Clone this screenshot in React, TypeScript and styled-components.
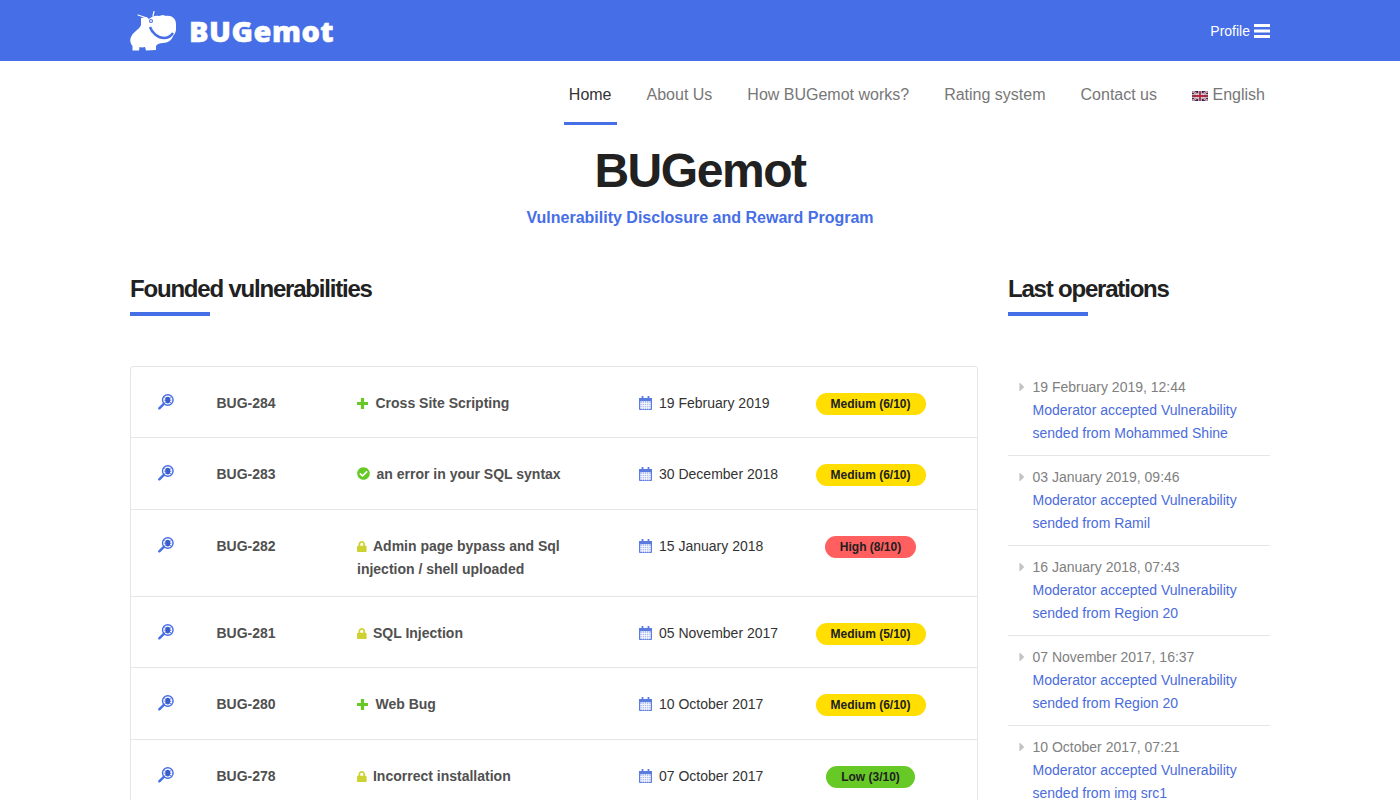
import React from 'react';
import styled, { createGlobalStyle } from 'styled-components';
import { FaCheckCircle, FaLock, FaCaretRight } from 'react-icons/fa';

const BLUE = '#466ee6';

const Global = createGlobalStyle`
  html, body { margin: 0; padding: 0; background: #fff; overflow: hidden; height: 800px; }
  body { font-family: "Liberation Sans", Arial, sans-serif; color: #212121; font-size: 14px; }
`;
const TopBar = styled.header`
  background: ${BLUE};
  height: 61px;
`;
const Container = styled.div`
  width: 1140px;
  margin: 0 auto;
`;
const TopInner = styled(Container)`
  display: flex;
  align-items: center;
  justify-content: space-between;
  height: 61px;
`;
const Logo = styled.div`
  display: flex;
  align-items: center;
  gap: 13px;
  color: #fff;
  height: 61px;
`;
const LogoText = styled.span`
  font-family: "Open Sans", sans-serif;
  font-weight: 800;
  font-size: 29px;
  letter-spacing: 0.5px;
  line-height: 1;
  -webkit-text-stroke: 0.5px #fff;
`;
const ProfileLink = styled.div`
  display: flex;
  align-items: center;
  gap: 4px;
  color: #fff;
  font-size: 14px;
`;
const Nav = styled.nav`
  display: flex;
  justify-content: flex-end;
  gap: 25px;
  height: 64px;
`;
const NavItem = styled.a<{ $active?: boolean }>`
  display: flex;
  align-items: center;
  gap: 4.5px;
  height: 64px;
  box-sizing: border-box;
  padding: 7px 5px 0;
  font-size: 16px;
  color: ${p => (p.$active ? '#333' : '#777')};
  border-bottom: 3px solid ${p => (p.$active ? BLUE : 'transparent')};
`;
const Hero = styled.div`
  text-align: center;
`;
const Title = styled.h1`
  margin: 17px 0 0;
  font-size: 48px;
  line-height: 58px;
  font-weight: 700;
  letter-spacing: -1.45px;
  color: #212121;
`;
const Subtitle = styled.p`
  margin: 6px 0 0;
  font-size: 16px;
  line-height: 24px;
  font-weight: 700;
  color: ${BLUE};
`;
const Columns = styled(Container)`
  display: grid;
  grid-template-columns: 848px 262px;
  column-gap: 30px;
  margin-top: 41px;
`;
const SectionTitle = styled.h2`
  margin: 0;
  height: 50px;
  font-size: 24px;
  line-height: 36px;
  font-weight: 700;
  letter-spacing: -1.2px;
  color: #212121;
  display: flex;
  flex-direction: column;
  &::after {
    content: '';
    width: 80px;
    height: 4px;
    margin-top: 5px;
    background: ${BLUE};
  }
`;
const Table = styled.div`
  margin-top: 45px;
  border: 1px solid #e6e6e6;
  border-radius: 3px;
`;
const Row = styled.div`
  display: grid;
  grid-template-columns: 85.5px 140.5px 282px 176.5px 1fr;
  min-height: 71.4px;
  box-sizing: border-box;
  padding: 25px 0 15px;
  border-bottom: 1px solid #e6e6e6;
  line-height: 23px;
  &:last-child { border-bottom: 0; }
`;
const SearchCell = styled.div`
  padding-left: 27px;
`;
const SearchSvg = styled.svg`
  display: block;
  margin-top: 2px;
`;
const BugId = styled.div`
  font-weight: 700;
  color: #505050;
`;
const Vuln = styled.div`
  font-weight: 700;
  color: #505050;
  padding-right: 58px;
`;
const StatusIcon = styled.span<{ $color: string; $gap: number }>`
  display: inline-block;
  height: 0;
  line-height: 0;
  color: ${p => p.$color};
  margin-right: ${p => p.$gap}px;
  svg { vertical-align: -1px; }
`;
const LockGlyph = styled(FaLock)`
  width: 9.6px;
  height: 11px;
`;
const CheckGlyph = styled(FaCheckCircle)`
  width: 13px;
  height: 13px;
`;
const DateCell = styled.div`
  color: #333;
  display: flex;
  align-items: flex-start;
  gap: 7px;
`;
const CalendarSvg = styled.svg`
  margin-top: 4px;
  flex: none;
`;
const BadgeCell = styled.div`
  width: 110px;
  display: flex;
  justify-content: center;
  margin-top: 1px;
`;
const Badge = styled.span<{ $bg: string }>`
  background: ${p => p.$bg};
  color: #212121;
  font-size: 12px;
  font-weight: 700;
  line-height: 22px;
  height: 22px;
  padding: 0 15px;
  border-radius: 11px;
`;
const Ops = styled.ul`
  list-style: none;
  margin: 45px 0 0;
  padding: 0;
`;
const Op = styled.li`
  display: grid;
  grid-template-columns: 24.5px 1fr;
  padding: 10px 0;
  border-bottom: 1px solid #e6e6e6;
  line-height: 23px;
  &:last-child { border-bottom: 0; }
`;
const OpArrow = styled.span`
  color: #c4c4c4;
  font-size: 14px;
  padding-left: 7px;
  svg { vertical-align: -2px; }
`;
const OpDate = styled.div`
  color: #808080;
`;
const OpLink = styled.a`
  display: block;
  color: #4a6cdc;
`;
const BarsSvg = styled.svg`
  display: block;
  margin-top: 1px;
`;
const FlagSvg = styled.svg`
  flex: none;
  margin-top: 2px;
`;
const HippoSvg = styled.svg`
  flex: none;
  margin-top: 1px;
`;

const BugSearch = () => (
  <SearchSvg width="16" height="16" viewBox="0 0 17 17" fill="none">
    <circle cx="10.4" cy="6.4" r="5.6" stroke={BLUE} strokeWidth="1.5" />
    <path d="M6.2 10.6 1.4 15.2" stroke={BLUE} strokeWidth="2.6" strokeLinecap="round" />
    <ellipse cx="10.4" cy="6.4" rx="2.6" ry="3.6" fill="#3a5ccc" />
    <path d="M6.8 3.8 9 5M14 3.8 11.8 5M6.6 6.6h2.4M14.2 6.6h-2.4M6.8 9.4 9 8M14 9.4 11.8 8" stroke="#3a5ccc" strokeWidth=".9" />
  </SearchSvg>
);
const Calendar = () => (
  <CalendarSvg width="13" height="14" viewBox="0 0 13 14">
    <path d="M.5 2.5h12v11H.5z" fill="#a9b9ee" stroke="#5a7be0" strokeWidth="1" />
    <path d="M0 2h13v3H0z" fill="#5a7be0" />
    <path d="M2.6 0h1.8v3.4H2.6zM8.6 0h1.8v3.4H8.6z" fill="#5a7be0" />
    <path d="M1 7.4h11M1 9.6h11M1 11.8h11M3.2 5v8.5M5.4 5v8.5M7.6 5v8.5M9.8 5v8.5" stroke="#fff" strokeWidth=".8" />
  </CalendarSvg>
);
const Plus = () => (
  <svg width="11" height="11" viewBox="0 0 11 11">
    <path d="M3.9 0h3.2v3.9H11v3.2H7.1V11H3.9V7.1H0V3.9h3.9z" fill="currentColor" />
  </svg>
);
const Bars = () => (
  <BarsSvg width="16" height="14" viewBox="0 0 16 14">
    <path d="M0 0h16v3H0zM0 5.5h16v3H0zM0 11h16v3H0z" fill="#fff" />
  </BarsSvg>
);
const Flag = () => (
  <FlagSvg width="16" height="10" viewBox="0 0 16 10">
    <rect width="16" height="10" fill="#262850" />
    <path d="M0 0 16 10M16 0 0 10" stroke="#e8e0e4" strokeWidth="2" />
    <path d="M0 0 16 10M16 0 0 10" stroke="#a82c44" strokeWidth=".7" />
    <path d="M8 0v10M0 5h16" stroke="#e8e0e4" strokeWidth="3.4" />
    <path d="M8 0v10M0 5h16" stroke="#a82c44" strokeWidth="1.8" />
  </FlagSvg>
);
const Hippo = () => (
  <HippoSvg width="46" height="40" viewBox="0 0 46 40">
    <path fill="#fff" d="M11 7 L16 6 L19 8 C22 5 26 4 29 5 L33 4 L36 5 C41 4 46 7 46 13 C46.5 18 46 22 43 25 C42 29 38 32 33 32 C30 32 27 33 26 35 L26 39 L16 39.5 L15 36 C13 36.5 11 36.5 9.5 36 L9 39.5 L2.5 39.5 L2.5 35 C0 32 -0.5 28 1.5 25 C4 20 9 19 11 14 Z" />
    <path d="M20 16 C22 22 28 27 34 27 C38 27 41 25 43 22" fill="none" stroke={BLUE} strokeWidth="2.4" />
    <circle cx="21" cy="10" r="2" fill={BLUE} />
    <circle cx="21" cy="10" r=".9" fill="#fff" />
    <path d="M8 4 L17 7M23 5 L24 0.5" stroke="#fff" strokeWidth="1.2" strokeLinecap="round" fill="none" />
  </HippoSvg>
);

const statusMap = {
  plus: { icon: <Plus />, color: '#66c926', gap: 7.5 },
  check: { icon: <CheckGlyph />, color: '#66c926', gap: 6.5 },
  lock: { icon: <LockGlyph />, color: '#cdd231', gap: 6.4 },
};
const bugs = [
  { id: 'BUG-284', s: 'plus', title: 'Cross Site Scripting', date: '19 February 2019', rate: 'Medium (6/10)', bg: '#ffde00' },
  { id: 'BUG-283', s: 'check', title: 'an error in your SQL syntax', date: '30 December 2018', rate: 'Medium (6/10)', bg: '#ffde00' },
  { id: 'BUG-282', s: 'lock', title: 'Admin page bypass and Sql injection / shell uploaded', date: '15 January 2018', rate: 'High (8/10)', bg: '#ff5f5f' },
  { id: 'BUG-281', s: 'lock', title: 'SQL Injection', date: '05 November 2017', rate: 'Medium (5/10)', bg: '#ffde00' },
  { id: 'BUG-280', s: 'plus', title: 'Web Bug', date: '10 October 2017', rate: 'Medium (6/10)', bg: '#ffde00' },
  { id: 'BUG-278', s: 'lock', title: 'Incorrect installation', date: '07 October 2017', rate: 'Low (3/10)', bg: '#66c926' },
] as const;
const ops = [
  ['19 February 2019, 12:44', 'Mohammed Shine'],
  ['03 January 2019, 09:46', 'Ramil'],
  ['16 January 2018, 07:43', 'Region 20'],
  ['07 November 2017, 16:37', 'Region 20'],
  ['10 October 2017, 07:21', 'img src1'],
];

export default function App() {
  return (
    <>
      <Global />
      <TopBar>
        <TopInner>
          <Logo><Hippo /><LogoText>BUGemot</LogoText></Logo>
          <ProfileLink>Profile <Bars /></ProfileLink>
        </TopInner>
      </TopBar>
      <Container>
        <Nav>
          <NavItem $active>Home</NavItem>
          <NavItem>About Us</NavItem>
          <NavItem>How BUGemot works?</NavItem>
          <NavItem>Rating system</NavItem>
          <NavItem>Contact us</NavItem>
          <NavItem><Flag />English</NavItem>
        </Nav>
      </Container>
      <Hero>
        <Title>BUGemot</Title>
        <Subtitle>Vulnerability Disclosure and Reward Program</Subtitle>
      </Hero>
      <Columns>
        <section>
          <SectionTitle>Founded vulnerabilities</SectionTitle>
          <Table>
            {bugs.map(b => {
              const st = statusMap[b.s];
              return (
                <Row key={b.id}>
                  <SearchCell><BugSearch /></SearchCell>
                  <BugId>{b.id}</BugId>
                  <Vuln><StatusIcon $color={st.color} $gap={st.gap}>{st.icon}</StatusIcon>{b.title}</Vuln>
                  <DateCell><Calendar />{b.date}</DateCell>
                  <BadgeCell><Badge $bg={b.bg}>{b.rate}</Badge></BadgeCell>
                </Row>
              );
            })}
          </Table>
        </section>
        <aside>
          <SectionTitle>Last operations</SectionTitle>
          <Ops>
            {ops.map(([d, who]) => (
              <Op key={d}>
                <OpArrow><FaCaretRight /></OpArrow>
                <div>
                  <OpDate>{d}</OpDate>
                  <OpLink>Moderator accepted Vulnerability sended from {who}</OpLink>
                </div>
              </Op>
            ))}
          </Ops>
        </aside>
      </Columns>
    </>
  );
}
